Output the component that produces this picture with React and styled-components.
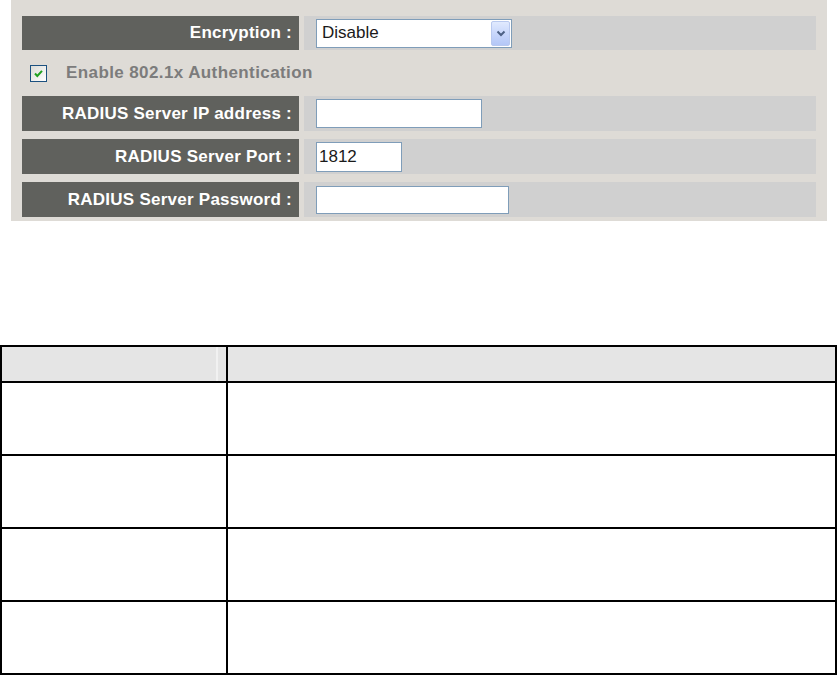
import React from "react";
import styled, { createGlobalStyle } from "styled-components";

const GlobalStyle = createGlobalStyle`
  html, body {
    margin: 0;
    padding: 0;
    background: #ffffff;
  }
  body {
    font-family: "Liberation Sans", Arial, sans-serif;
  }
`;

const Page = styled.div`
  width: 837px;
  height: 675px;
  overflow: hidden;
`;

const Panel = styled.div`
  margin-left: 11px;
  width: 816px;
  height: 221px;
  box-sizing: border-box;
  padding: 16px 11px 0;
  background: #dedbd6;
  display: flex;
  flex-direction: column;
`;

const FieldRow = styled.div`
  display: grid;
  grid-template-columns: 277px 1fr;
  column-gap: 5px;
  height: ${(p) => p.h || 35}px;
  margin-top: ${(p) => p.mt || 0}px;
`;

const Label = styled.div`
  background: #60615d;
  color: #ffffff;
  font-weight: bold;
  font-size: 17px;
  letter-spacing: 0.25px;
  text-align: right;
  padding-right: 7px;
  display: flex;
  align-items: center;
  justify-content: flex-end;
  white-space: nowrap;
`;

const ValueCell = styled.div`
  background: #d0d0d0;
  display: flex;
  align-items: center;
  padding-left: 12px;
`;

const TextBox = styled.div`
  width: ${(p) => p.w}px;
  height: ${(p) => p.h || 29}px;
  box-sizing: border-box;
  border: 1px solid #7f9db9;
  background: #ffffff;
  font-size: 17px;
  color: #1a1a1a;
  display: flex;
  align-items: center;
  padding-left: 2px;
`;

const Select = styled(TextBox)`
  justify-content: space-between;
  padding: 1px 1px 1px 5px;
`;

const ArrowButton = styled.span`
  width: 19px;
  height: 100%;
  box-sizing: border-box;
  border: 1px solid #b9c9ef;
  border-radius: 2px;
  background: linear-gradient(180deg, #e1eafe 0%, #c6d5fb 55%, #b4c7f6 100%);
  display: flex;
  align-items: center;
  justify-content: center;
`;

const CheckRow = styled.div`
  height: 46px;
  display: flex;
  align-items: center;
  padding-left: 8px;
  gap: 19px;
`;

const CheckBox = styled.span`
  width: 17px;
  height: 17px;
  box-sizing: border-box;
  border: 1px solid #1c5180;
  background: linear-gradient(135deg, #dcdcd7 0%, #ffffff 100%);
  display: flex;
  align-items: center;
  justify-content: center;
`;

const CheckText = styled.span`
  color: #7c7c7c;
  font-weight: bold;
  font-size: 17px;
  letter-spacing: 0.4px;
`;

const Table = styled.table`
  margin-top: 124px;
  width: 837px;
  border-spacing: 0;
  border-top: 2px solid #000;
  border-left: 2px solid #000;
  table-layout: fixed;
`;

const HeadCell = styled.th`
  height: 34px;
  padding: 0;
  border-right: 2px solid #000;
  border-bottom: 2px solid #000;
  background: ${(p) =>
    p.seam
      ? "linear-gradient(to right, #e5e5e5 214px, #f1f1f1 214px, #f1f1f1 216px, #e5e5e5 216px)"
      : "#e5e5e5"};
  width: ${(p) => (p.w ? `${p.w}px` : "auto")};
`;

const Cell = styled.td`
  height: 71px;
  padding: 0;
  border-right: 2px solid #000;
  border-bottom: 2px solid #000;
`;

const fields = [
  { label: "RADIUS Server IP address :", w: 166, value: "", mt: 0 },
  { label: "RADIUS Server Port :", w: 86, value: "1812", mt: 8, h: 30 },
  { label: "RADIUS Server Password :", w: 193, value: "", mt: 8, h: 28 },
];

export default function App() {
  return (
    <Page>
      <GlobalStyle />
      <Panel>
        <FieldRow h={34}>
          <Label>Encryption :</Label>
          <ValueCell>
            <Select w={196}>
              <span>Disable</span>
              <ArrowButton>
                <svg width="10" height="7" viewBox="0 0 10 7">
                  <path d="M1.5 1.5 L5 5 L8.5 1.5" fill="none" stroke="#4d6185" strokeWidth="2" />
                </svg>
              </ArrowButton>
            </Select>
          </ValueCell>
        </FieldRow>
        <CheckRow>
          <CheckBox>
            <svg width="11" height="11" viewBox="0 0 11 11">
              <path d="M2 5.5 L4.3 8 L9 2.8" fill="none" stroke="#21a121" strokeWidth="2" />
            </svg>
          </CheckBox>
          <CheckText>Enable 802.1x Authentication</CheckText>
        </CheckRow>
        {fields.map((f) => (
          <FieldRow key={f.label} mt={f.mt}>
            <Label>{f.label}</Label>
            <ValueCell>
              <TextBox w={f.w} h={f.h}>{f.value}</TextBox>
            </ValueCell>
          </FieldRow>
        ))}
      </Panel>
      <Table>
        <thead>
          <tr>
            <HeadCell w={224} seam />
            <HeadCell />
          </tr>
        </thead>
        <tbody>
          {[0, 1, 2, 3].map((i) => (
            <tr key={i}>
              <Cell />
              <Cell />
            </tr>
          ))}
        </tbody>
      </Table>
    </Page>
  );
}
